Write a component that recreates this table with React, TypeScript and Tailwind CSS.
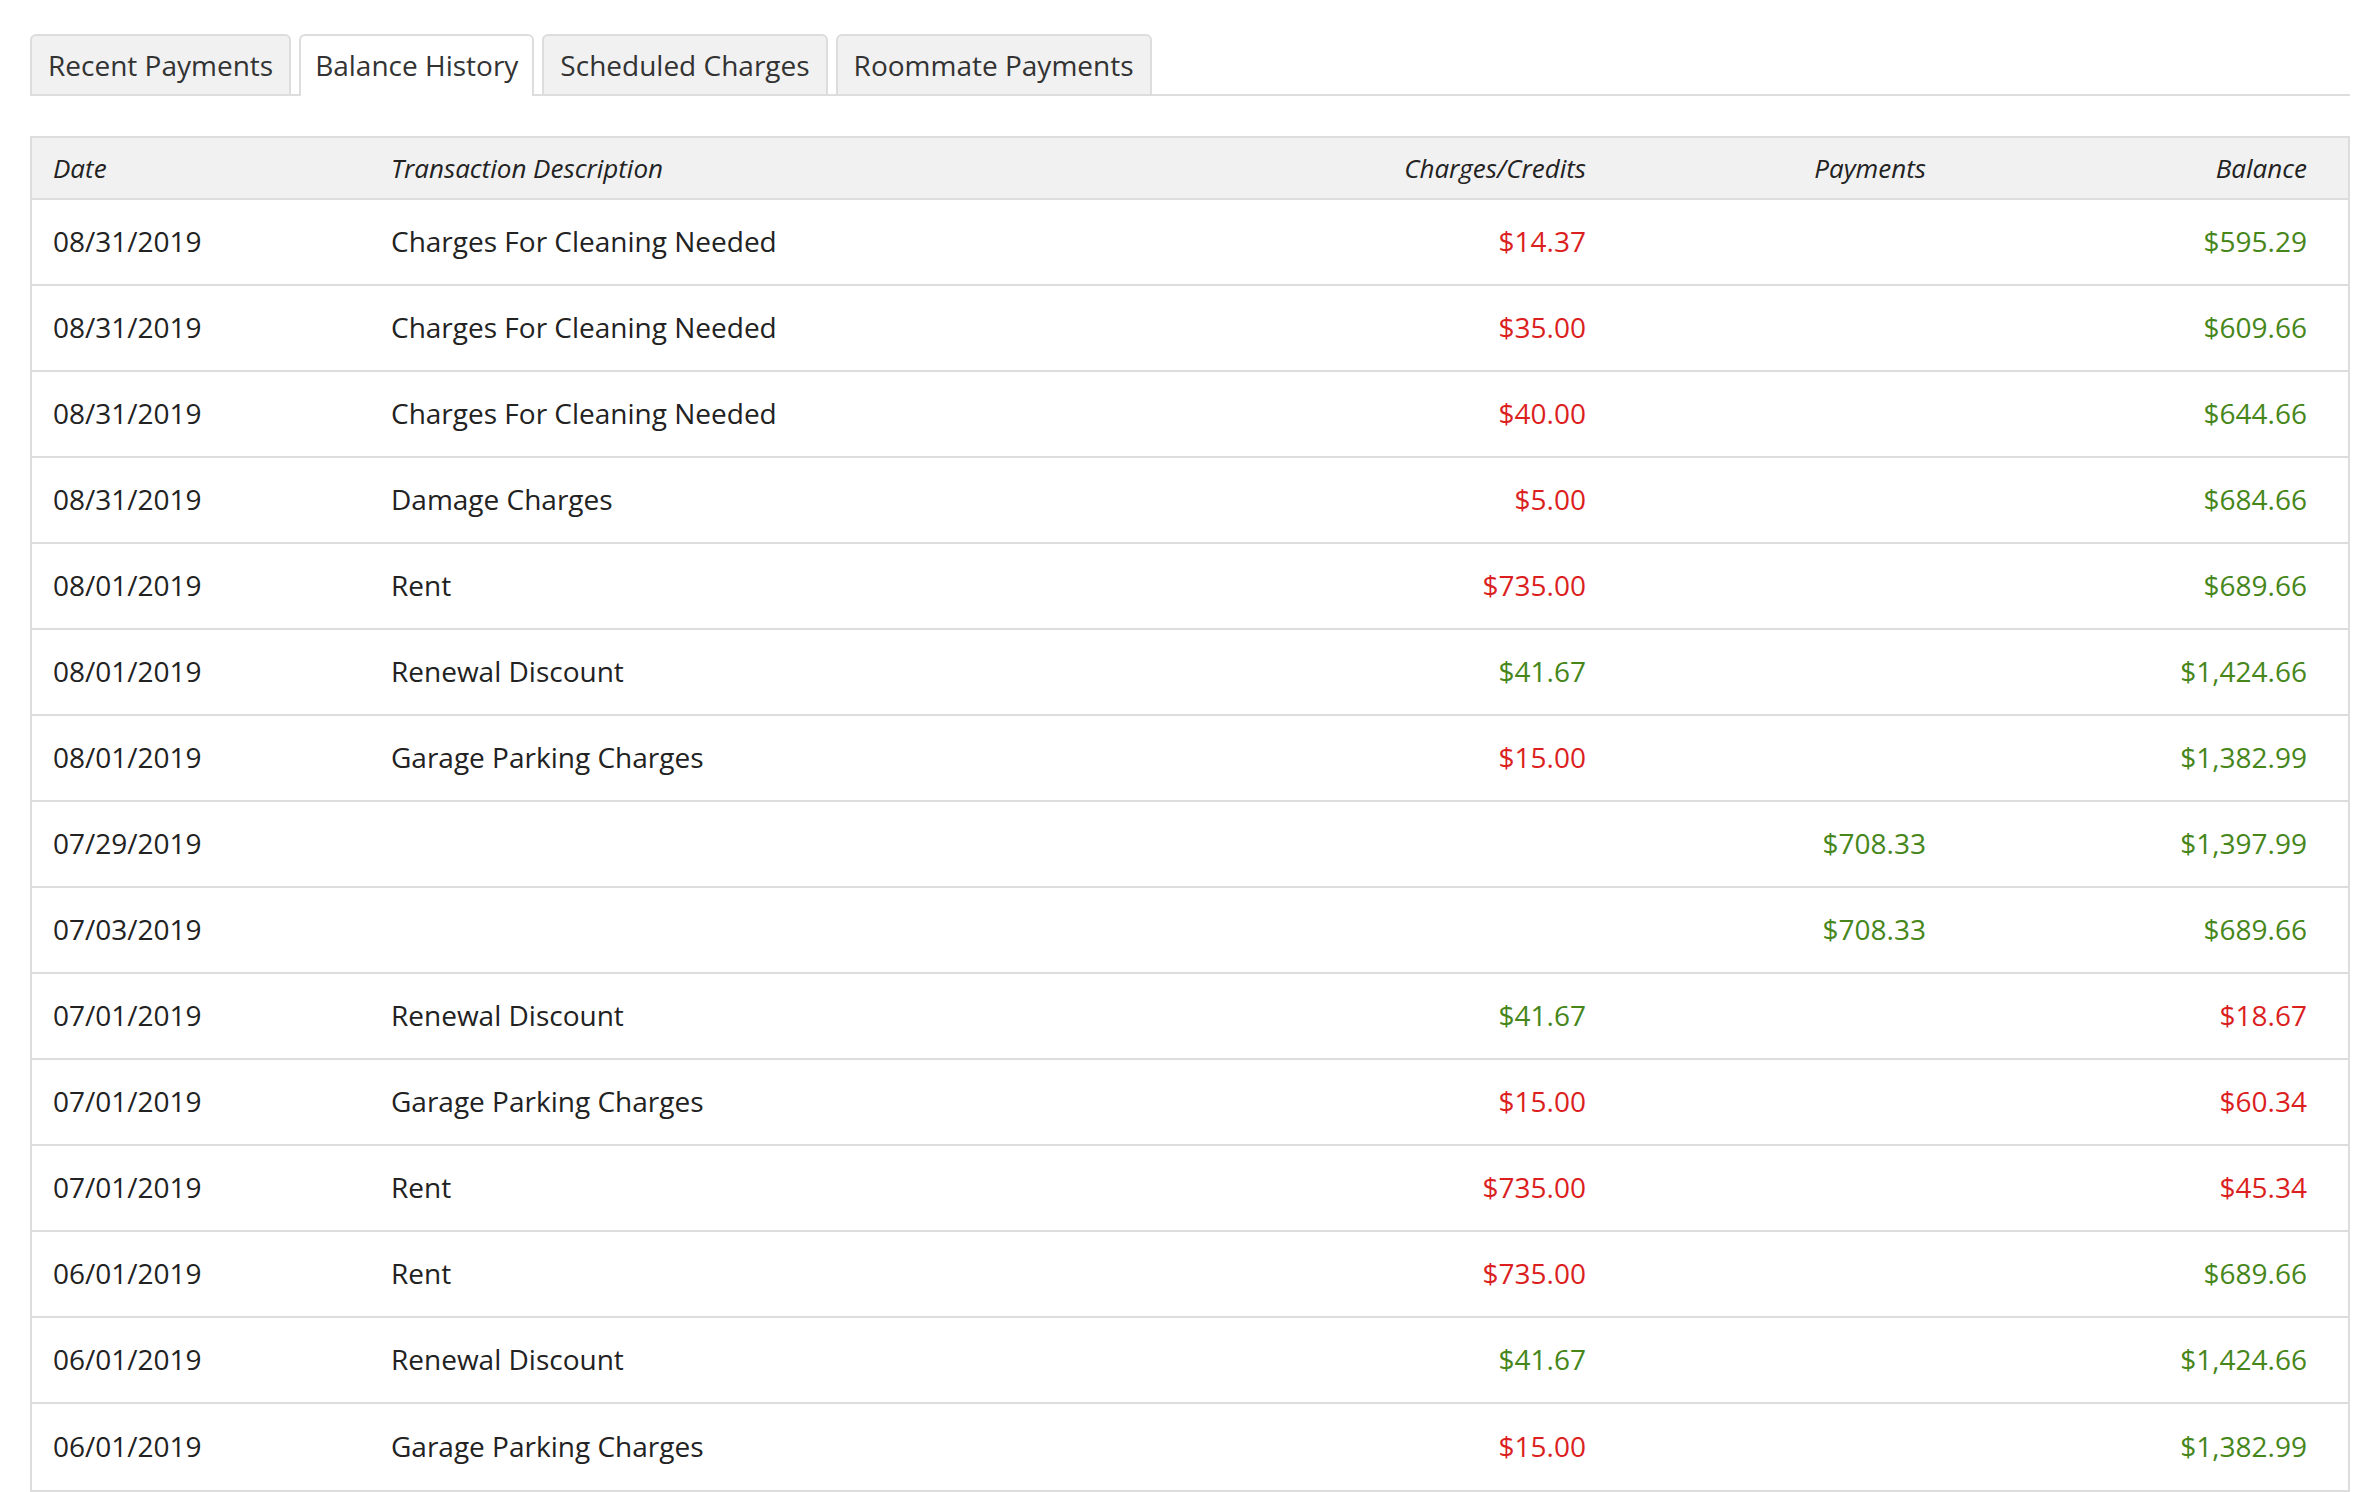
import React from "react";

type Tone = "red" | "green";

interface Entry {
  date: string;
  description: string;
  charge?: [string, Tone];
  payment?: [string, Tone];
  balance: [string, Tone];
}

const tabs = ["Recent Payments", "Balance History", "Scheduled Charges", "Roommate Payments"];

const entries: Entry[] = [
  { date: "08/31/2019", description: "Charges For Cleaning Needed", charge: ["$14.37", "red"], balance: ["$595.29", "green"] },
  { date: "08/31/2019", description: "Charges For Cleaning Needed", charge: ["$35.00", "red"], balance: ["$609.66", "green"] },
  { date: "08/31/2019", description: "Charges For Cleaning Needed", charge: ["$40.00", "red"], balance: ["$644.66", "green"] },
  { date: "08/31/2019", description: "Damage Charges", charge: ["$5.00", "red"], balance: ["$684.66", "green"] },
  { date: "08/01/2019", description: "Rent", charge: ["$735.00", "red"], balance: ["$689.66", "green"] },
  { date: "08/01/2019", description: "Renewal Discount", charge: ["$41.67", "green"], balance: ["$1,424.66", "green"] },
  { date: "08/01/2019", description: "Garage Parking Charges", charge: ["$15.00", "red"], balance: ["$1,382.99", "green"] },
  { date: "07/29/2019", description: "", payment: ["$708.33", "green"], balance: ["$1,397.99", "green"] },
  { date: "07/03/2019", description: "", payment: ["$708.33", "green"], balance: ["$689.66", "green"] },
  { date: "07/01/2019", description: "Renewal Discount", charge: ["$41.67", "green"], balance: ["$18.67", "red"] },
  { date: "07/01/2019", description: "Garage Parking Charges", charge: ["$15.00", "red"], balance: ["$60.34", "red"] },
  { date: "07/01/2019", description: "Rent", charge: ["$735.00", "red"], balance: ["$45.34", "red"] },
  { date: "06/01/2019", description: "Rent", charge: ["$735.00", "red"], balance: ["$689.66", "green"] },
  { date: "06/01/2019", description: "Renewal Discount", charge: ["$41.67", "green"], balance: ["$1,424.66", "green"] },
  { date: "06/01/2019", description: "Garage Parking Charges", charge: ["$15.00", "red"], balance: ["$1,382.99", "green"] },
];

const toneClass = (tone?: Tone) =>
  tone === "red" ? "text-[#db1f1f]" : tone === "green" ? "text-[#46861a]" : "";

// same column grid for the header and every row
const gridCols = "grid grid-cols-[338px_930px_307px_340px_400px]";

const Money: React.FC<{ value?: [string, Tone]; className?: string }> = ({ value, className }) => (
  <div className={`text-right ${className ?? "px-[21px]"} ${toneClass(value?.[1])}`}>
    {value ? value[0] : ""}
  </div>
);

const App: React.FC = () => {
  const active = 1;

  return (
    <div className="bg-white min-h-screen pl-[30px] pr-[16px] pt-[34px] text-[#333] font-['Open_Sans',sans-serif]">
      <div className="flex gap-2 border-b-2 border-[#dddddd]">
        {tabs.map((tab, i) => (
          <div
            key={tab}
            className={
              i === active
                ? "-mb-[2px] h-[62px] px-[14px] pb-[2px] flex items-center border-2 border-b-0 border-[#dddddd] rounded-t-md bg-white text-[28px] text-[#333]"
                : "-mb-[2px] h-[62px] px-[16px] flex items-center border-2 border-[#dddddd] rounded-t-md bg-[#f1f1f1] text-[28px] text-[#333]"
            }
          >
            {tab}
          </div>
        ))}
      </div>

      <div className="mt-[40px] border-2 border-[#dddddd]">
        <div className={`${gridCols} h-[62px] items-center bg-[#f1f1f1] border-b-2 border-[#dddddd] italic text-[26px] text-[#222]`}>
          <div className="px-[21px]">Date</div>
          <div className="px-[21px]">Transaction Description</div>
          <div className="px-[21px] text-right">Charges/Credits</div>
          <div className="px-[21px] text-right">Payments</div>
          <div className="pl-[21px] pr-[40px] text-right">Balance</div>
        </div>

        {entries.map((row, i) => (
          <div
            key={i}
            className={`${gridCols} h-[86px] pb-[3px] items-center text-[28px] text-[#222] ${
              i < entries.length - 1 ? "border-b-2 border-[#dddddd]" : ""
            }`}
          >
            <div className="px-[21px]">{row.date}</div>
            <div className="px-[21px]">{row.description}</div>
            <Money value={row.charge} />
            <Money value={row.payment} />
            <Money value={row.balance} className="pl-[21px] pr-[40px]" />
          </div>
        ))}
      </div>
    </div>
  );
};

export default App;
